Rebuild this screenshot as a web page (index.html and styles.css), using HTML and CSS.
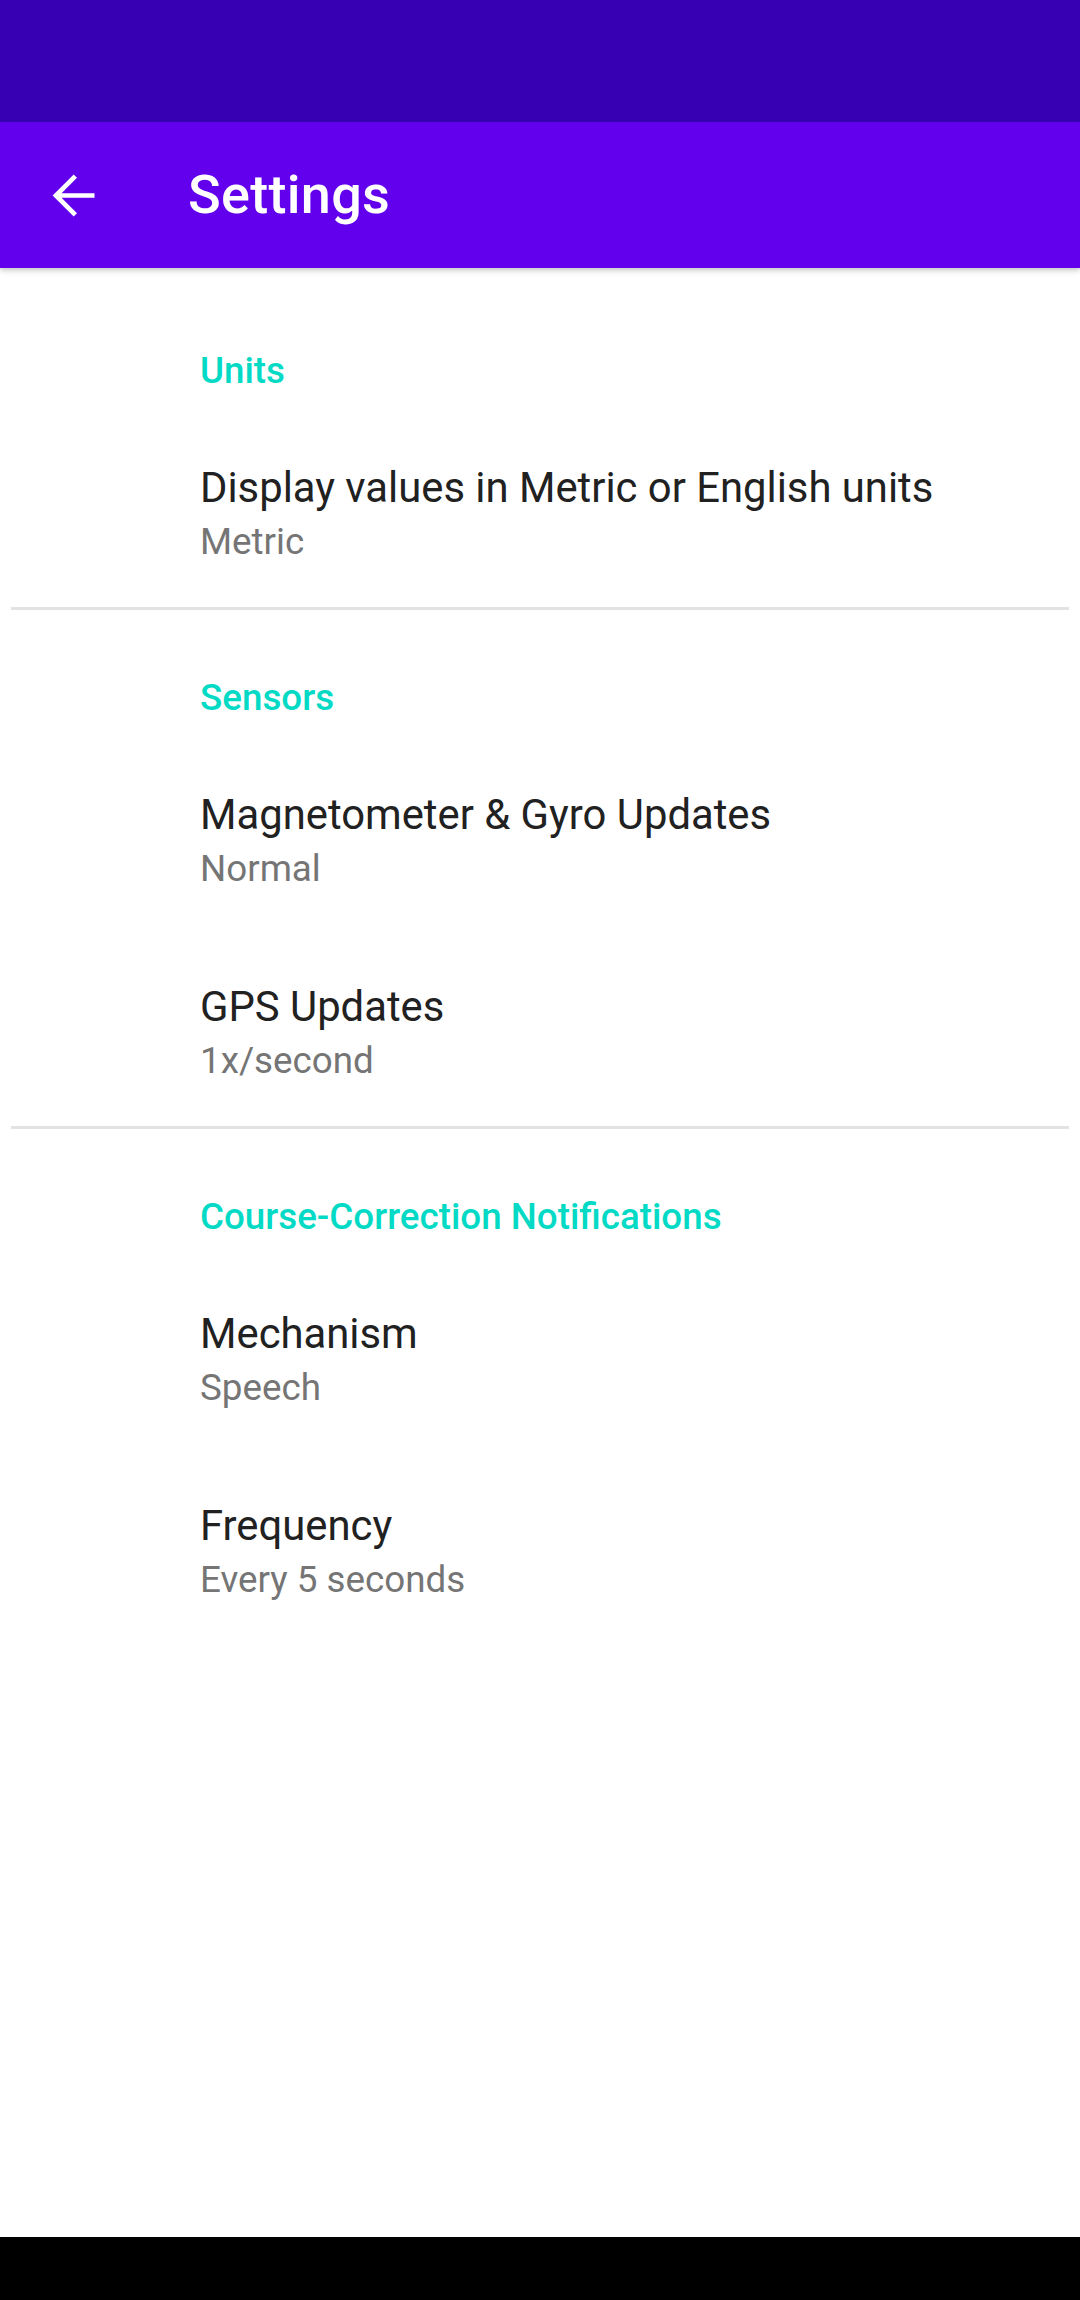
FILE: index.html
```html
<!DOCTYPE html>
<html lang="en">
<head>
<meta charset="utf-8">
<title>Settings</title>
<link rel="stylesheet" href="styles.css">
</head>
<body>
<div class="screen">
  <div class="status-bar"></div>
  <header class="app-bar">
    <svg class="back-icon" viewBox="0 0 24 24" width="63" height="63" aria-hidden="true">
      <path fill="none" stroke="#ffffff" stroke-width="1.8" stroke-linecap="butt" stroke-linejoin="miter" d="M20 12H5.2M12.7 4.6L5.3 12l7.4 7.4"/>
    </svg>
    <h1 class="app-title">Settings</h1>
  </header>
  <main class="content">
    <section class="group">
      <div class="category">Units</div>
      <div class="pref">
        <div class="pref-title">Display values in Metric or English units</div>
        <div class="pref-summary">Metric</div>
      </div>
    </section>
    <div class="divider"></div>
    <section class="group">
      <div class="category">Sensors</div>
      <div class="pref">
        <div class="pref-title">Magnetometer &amp; Gyro Updates</div>
        <div class="pref-summary">Normal</div>
      </div>
      <div class="pref">
        <div class="pref-title">GPS Updates</div>
        <div class="pref-summary">1x/second</div>
      </div>
    </section>
    <div class="divider"></div>
    <section class="group">
      <div class="category">Course-Correction Notifications</div>
      <div class="pref">
        <div class="pref-title">Mechanism</div>
        <div class="pref-summary">Speech</div>
      </div>
      <div class="pref">
        <div class="pref-title">Frequency</div>
        <div class="pref-summary">Every 5 seconds</div>
      </div>
    </section>
  </main>
  <div class="nav-bar"></div>
</div>
</body>
</html>
```
FILE: styles.css
```css
* {
  box-sizing: border-box;
}

html, body {
  margin: 0;
  padding: 0;
  background: #ffffff;
}

body {
  font-family: Roboto, "Noto Sans", "Liberation Sans", sans-serif;
}

.screen {
  width: 1080px;
  height: 2300px;
  display: flex;
  flex-direction: column;
  overflow: hidden;
}

.status-bar {
  height: 122px;
  flex: 0 0 122px;
  background: #3700B3;
}

.app-bar {
  position: relative;
  z-index: 2;
  height: 146px;
  flex: 0 0 146px;
  background: #6200EE;
  display: flex;
  align-items: center;
  padding-left: 42px;
  box-shadow: 0 3px 6px rgba(0, 0, 0, 0.16), 0 1px 3px rgba(0, 0, 0, 0.10);
}

.back-icon {
  display: block;
  flex: 0 0 63px;
  margin-top: 1px;
}

.app-title {
  margin: 0 0 0 83px;
  font-size: 54px;
  font-weight: 500;
  color: #ffffff;
  letter-spacing: 0.3px;
  line-height: 1;
}

.content {
  flex: 1 1 auto;
  padding-top: 14.5px;
  background: #ffffff;
}

.category {
  padding: 63px 16px 21px 200px;
  font-size: 36.75px;
  line-height: 49px;
  font-weight: 500;
  color: #03DAC5;
}

.pref {
  padding: 43px 42px 41.5px 200px;
}

.pref-title {
  font-size: 41.8px;
  line-height: 58px;
  color: #212121;
}

.pref-summary {
  font-size: 36.75px;
  line-height: 49px;
  color: #757575;
}

.divider {
  height: 3px;
  margin: 0 11px;
  background: #e2e2e2;
}

.nav-bar {
  height: 63px;
  flex: 0 0 63px;
  background: #000000;
}
```
